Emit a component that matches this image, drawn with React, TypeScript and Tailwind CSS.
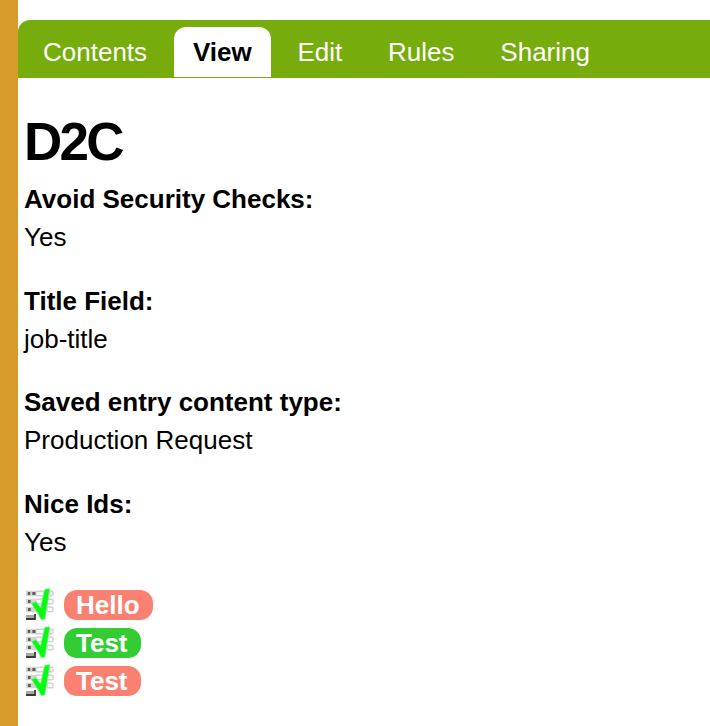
const font = 'font-["Liberation_Sans",Arial,sans-serif]';

function Tab({ label, active = false }: { label: string; active?: boolean }) {
  return (
    <a
      className={
        active
          ? 'flex h-[50px] items-center rounded-t-[12px] bg-white px-[19px] font-bold text-black'
          : 'flex h-[50px] items-center px-[19px] text-white'
      }
    >
      {label}
    </a>
  );
}

function Field({ label, value }: { label: string; value: string }) {
  return (
    <div className="mb-[25.6px] leading-[38px]">
      <div className="font-bold">{label}</div>
      <div>{value}</div>
    </div>
  );
}

function CheckListIcon() {
  return (
    <svg width="30" height="34" viewBox="0 0 30 34" className="shrink-0" fill="none">
      <g fill="#fafafa" stroke="#d2d2d2" strokeWidth="1.4">
        <rect x="12" y="3.2" width="9" height="4.6" rx="1" />
        <rect x="23.2" y="3.2" width="5.8" height="4.6" rx="1" />
        <rect x="12" y="11.2" width="9" height="4.6" rx="1" />
        <rect x="23.2" y="11.2" width="5.8" height="4.6" rx="1" />
        <rect x="12" y="19.2" width="9" height="4.6" rx="1" />
        <rect x="23.2" y="19.2" width="5.8" height="4.6" rx="1" />
      </g>
      <path d="M2 2.8h10v5.4H2zM2 10.8h10v5.4H2zM2 18.8h10v5.4H2z" fill="#d4d4d4" />
      <path d="M3.8 4h2.4v3H3.8zM8.4 4h3v3h-3zM4 12h2.6v3H4zM4 20h2.8v3H4z" fill="#5c5c5c" />
      <path d="M2 27h8v4H2z" fill="#a8a8a8" />
      <path d="M2 31h9v-5" stroke="#3a3a3a" strokeWidth="1.8" />
      <path
        d="M7.5 15.5 12 13.8 16.6 20 20.4 2.6 21.2 1.2 25.6 0.8 25.4 3.5 20.8 31 17.2 31.6 14.4 26Z"
        fill="#08f914"
        stroke="#6bf573"
        strokeWidth="0.8"
        strokeLinejoin="round"
      />
    </svg>
  );
}

function Entry({ label, ok = false }: { label: string; ok?: boolean }) {
  return (
    <div className="flex h-[38px] items-center">
      <CheckListIcon />
      <span
        className={`ml-[10px] flex h-[30px] items-center rounded-[13px] pl-[12px] pr-[13px] font-bold text-white ${
          ok ? 'bg-[#32cd32]' : 'bg-[#fa8072]'
        }`}
      >
        {label}
      </span>
    </div>
  );
}

export default function App() {
  return (
    <div className={`flex h-[726px] w-[710px] overflow-hidden bg-white text-[26px] text-black ${font}`}>
      <div className="w-[18px] shrink-0 bg-[#d69b2b]" />
      <div className="min-w-0 flex-1 pt-[20px]">
        <nav className="flex h-[58px] items-end gap-[7.8px] rounded-tl-[12px] bg-[#76ad0c] pb-px pl-[6px]">
          <Tab label="Contents" />
          <Tab label="View" active />
          <Tab label="Edit" />
          <Tab label="Rules" />
          <Tab label="Sharing" />
        </nav>
        <main className="pl-[6px]">
          <h1 className="mb-[8px] pt-[33px] text-[53px] font-bold leading-[61px] tracking-[-2.8px]">D2C</h1>
          <Field label="Avoid Security Checks:" value="Yes" />
          <Field label="Title Field:" value="job-title" />
          <Field label="Saved entry content type:" value="Production Request" />
          <Field label="Nice Ids:" value="Yes" />
          <Entry label="Hello" />
          <Entry label="Test" ok />
          <Entry label="Test" />
        </main>
      </div>
    </div>
  );
}
